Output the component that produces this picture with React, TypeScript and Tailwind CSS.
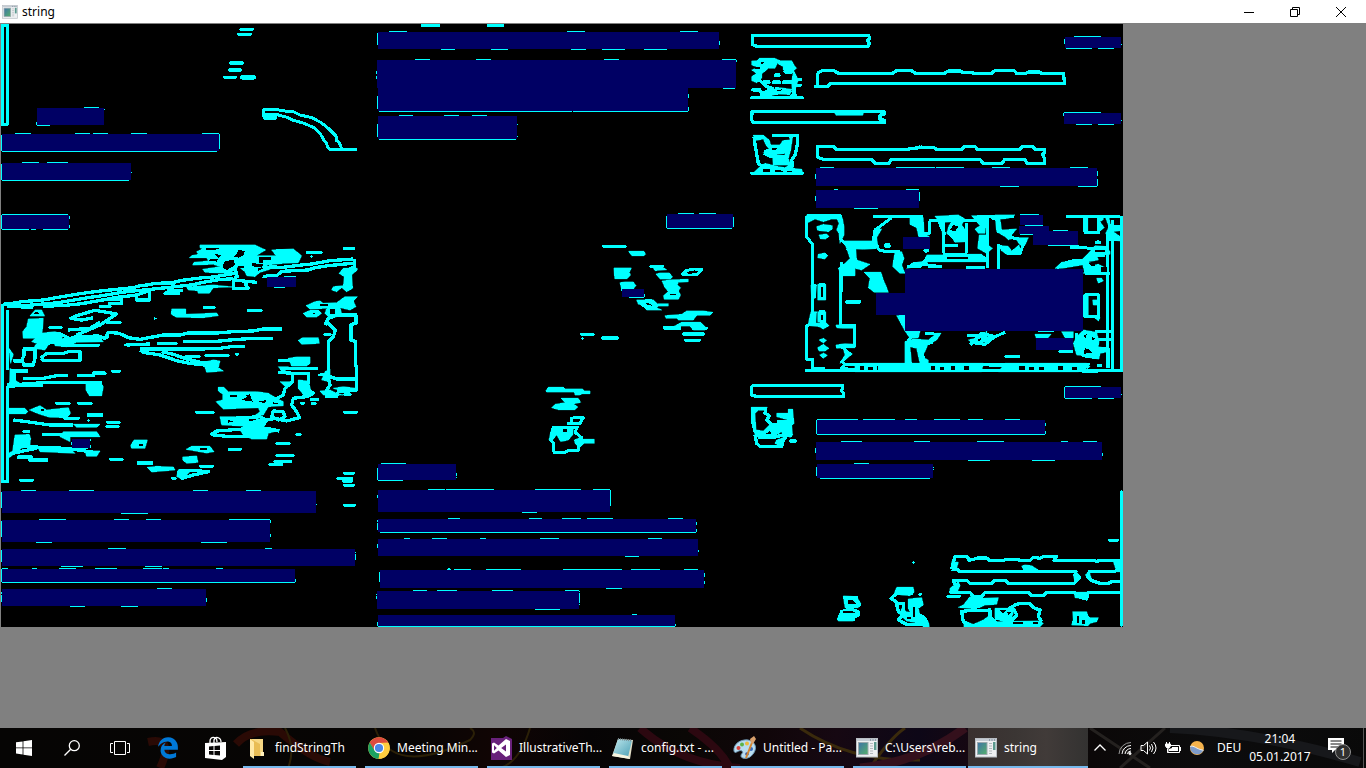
import React from "react";
import { FaEdgeLegacy } from "react-icons/fa6";

type Dash = [x1: number, x2: number, y: number, h?: number];
type Box = [x: number, y: number, w: number, h: number];

interface Region {
  x: number;
  y: number;
  weight?: number;
  edges?: string;
  solids?: string;
  holes?: string;
  dashes?: Dash[];
  boxes?: Box[];
  marks?: string;
}

// Every region is described in thirds of a pixel, relative to its own origin.
const regions: Region[] = [
  {
    x: 0,
    y: 0,
    edges:
      "M7 76H22V373H7ZM788 328H832L842 332L880 335L900 345L935 353L962 367L985 385L1008 408L1010 422L1018 428L1024 444M790 328V350M795 345H835L862 352L880 361L912 370L942 383L962 403L970 418L978 428L984 442L990 448H1070",
    dashes: [
      [718, 762, 88], [711, 756, 103], [687, 732, 189, 11], [684, 726, 210, 11],
      [669, 711, 232], [720, 768, 232, 14], [788, 831, 353, 13],
    ],
    boxes: [[111, 324, 201, 51], [6, 402, 651, 51], [6, 489, 387, 51], [6, 645, 201, 42]],
    marks:
      "M252 322H297M312 328H315M109 366V375M111 376H150M45 400H93M225 400H270M279 400H324M393 400H441M606 400H657M658 402V447M4 405V453M6 454H651M66 487H117M141 487H204M4 492V540M6 541H387M393 517H396M6 643H204M4 645V687M6 688H87M93 688H108M129 688H204M208 648V657M208 675V684",
  },
  {
    x: 0,
    y: 235,
    weight: 10,
    edges:
      "M22 225V405M8 208V739H22V452M8 208L45 204L66 200L130 195L180 186L240 176L300 168L400 158L420 152L450 149L460 146L520 142L545 136L600 129L640 126L705 115M20 215L60 213L130 207L175 203L210 197L270 187L300 183L365 172L420 166L500 158L535 154L580 149L600 144L655 134L700 131M130 214L195 211L245 206L325 192L350 187L410 180L440 170H450M325 192H365V205H325M410 178V195H448V166M707 90V108L712 125L702 130M740 135L738 150L745 160H700V135L770 142M790 103L810 96L850 97L905 90L935 87L990 77L1060 72M790 124L830 122L845 109L925 105L945 98L985 92L1065 84M1063 72V95L1045 105M230 300L300 270L350 237L285 226L230 242L212 250L245 255L280 248M205 285L270 280L300 262M115 305L150 295H175L198 305L215 315M140 325L180 318L230 305L295 303L315 310L325 292L358 295L385 308L420 313L490 300L540 300L565 294L650 294L700 290L760 288L790 282H845M320 310L325 300M550 320H640L700 314L760 310H818M380 330L450 327M420 345L430 352L480 360L530 377L570 385L640 393M485 350L520 358L560 372L600 382L635 385M420 342H600L660 340L700 334H735M68 342H105V370L100 390H72L66 375L72 360V342M122 370L140 355H190L205 350H240V376H130L122 370M22 448H60L130 443H305M30 453L130 450M70 430H130L170 422H205M230 421H285M30 408H85M45 408L42 440M975 270L985 250L1000 245L1010 240H1068V265L1053 268V315L1067 320V390L1070 400V465H1050L1035 470H1015L1010 485H980V465L990 450L985 430V380L985 320L1000 305L1006 285L990 270L980 260M990 425L1010 432H1068M835 377H920M850 400H955M835 412L880 415H925V440L920 460L940 475L920 485L880 490L875 510L890 530L898 548L860 558L825 550L800 555M878 415V440L855 460L850 480L830 490H805M665 550H700L780 545L800 555L790 570L740 568M632 600L650 588L730 582L800 580L838 588M650 588L640 600L680 604L750 604L780 595M820 528L850 530L855 545L835 555L815 545ZM40 555L80 560L150 570L220 570M48 640L65 632L130 638L200 640L295 654M125 598H210M20 660L60 650L110 640M540 706H575L625 710L580 720L545 730L535 715Z",
    solids:
      "M600 30H765L797 45L780 55L770 62L828 62L815 45L880 42L905 62L895 83L850 85L800 90L810 103L780 112L765 125L740 122L735 110L715 95L690 115L615 112L608 103L660 95L640 88L578 90L582 82L625 78L620 68H568L575 62L595 58L590 50L608 42L600 38ZM90 243L105 225H125L134 243ZM85 252L130 250L127 290L120 310H70L68 290L80 275ZM515 222H557V238L650 234L655 242L610 248L530 247L514 238ZM560 156L640 150L700 156L640 158L628 175L595 175L592 167L565 165ZM1030 100H1072V105L1055 120L1058 160L1040 170L1025 158L1010 170L995 165L1000 155L1030 152L1033 125L1017 115ZM1035 185H1072L1060 198L1068 215L1050 225L1020 218L1025 235L1010 245L990 250L975 235L980 220L930 222L918 212L945 200L960 198L970 205L1010 203ZM910 235L930 226H955L965 235L950 246H920ZM895 316L908 308H955L958 325L905 328ZM160 318L200 310L295 302L310 320L230 322L200 335L165 332ZM120 295L165 290L190 300L185 310L205 315L150 322L135 345L100 340L110 325L95 320L105 310H120ZM610 382L640 375L660 378L655 398L670 408L620 412ZM258 445H303L310 455L305 482H268L258 465ZM25 520H75L83 530L78 536H25ZM88 525L120 512L140 525L205 518L212 535L200 548L150 547L120 538ZM45 600L88 598L92 610L90 630L65 640L45 655L25 670V655L38 648ZM865 370L890 366H930V385L920 393H875ZM655 457H672L685 470H770L805 475L830 490L850 500V512L805 515L790 540L760 545L780 530L775 518L670 522L655 508L648 500L668 495V478L655 468ZM660 545H705L725 553L755 545L800 558L790 580L755 585L725 573L665 570ZM720 585H840L805 595L800 612H755L730 600ZM392 632L402 615H442L435 640H395ZM558 643L575 634H630L642 650L620 654ZM548 666L590 663L594 682L560 685L548 675ZM442 697L470 694L520 696L525 705L455 711ZM535 704L570 710L548 733L530 725ZM210 620L180 605L190 590L290 590L300 605L210 605ZM220 568H300L290 577H230ZM255 648H300L290 664H260ZM975 410L990 402V440L965 435ZM1030 480H970L960 468L990 465L1012 476ZM115 640L210 640L225 655L120 650ZM1030 470L1000 460L1030 455L1068 460ZM895 435L925 438L935 475L915 485L895 460ZM835 395H865L850 415ZM840 440H870L862 460ZM27 340L40 358L32 385ZM30 400L48 412L40 432L60 445L28 458Z",
    holes:
      "M618 39H662L640 46H618ZM640 55L665 62L655 68ZM716 45L735 48L730 62L715 68L700 64L710 58ZM672 80L700 74L705 90L680 106L668 96ZM776 66H812V74H790V84H776ZM756 84L790 88L786 98L758 94ZM715 94H733V100H715ZM632 72H655L650 80L628 77ZM775 98L790 100L775 108ZM725 495L750 480L758 500ZM775 500L800 495L795 505ZM820 502L840 507H820ZM690 480H712V486H690ZM735 480L750 478L745 488ZM418 628H428V634H418ZM600 640H622V646H600ZM938 234H945V238H938ZM960 207H985V213H960ZM990 222H1005V236H990ZM100 237L110 230L118 236ZM683 556L705 558L685 563ZM745 552L770 553L750 560ZM120 525L130 520L132 530Z",
    dashes: [
      [1029, 1065, 41], [918, 968, 53], [823, 885, 48], [608, 647, 217], [740, 788, 226], [145, 188, 277], [296, 335, 214],
      [316, 365, 262], [470, 533, 325], [553, 602, 364], [613, 689, 361], [333, 363, 409], [180, 300, 331], [165, 212, 505],
      [231, 278, 505], [585, 644, 532], [318, 362, 562], [316, 359, 575], [683, 726, 643], [826, 872, 625], [826, 884, 661],
      [820, 876, 680], [805, 850, 688], [410, 460, 684, 12], [327, 371, 673], [597, 642, 694], [513, 530, 730], [57, 102, 736],
      [1029, 1074, 532], [1029, 1065, 715], [1009, 1059, 731], [1026, 1059, 738, 12], [1029, 1065, 751], [886, 905, 598],
      [67, 90, 590], [50, 100, 667, 12], [85, 145, 675, 12], [190, 240, 550], [260, 311, 540, 12], [275, 320, 415, 12],
      [900, 915, 505], [932, 950, 505], [930, 958, 494], [970, 995, 298], [955, 990, 420], [705, 717, 358], [1030, 1055, 478, 12],
      [490, 540, 175, 12], [500, 550, 167, 10], [38, 72, 377, 12], [373, 450, 330], [494, 525, 145, 11], [60, 100, 217],
    ],
    boxes: [[801, 126, 87, 30], [216, 612, 54, 27]],
    marks:
      "M852 124H888M822 157H855M786 127H801M214 621V630M271 612V618M271 630V639M222 640H264M465 246V255M461 250H470M266 552V561M262 556H271M935 60V69M931 64H940",
  },
  {
    x: 370,
    y: 20,
    dashes: [[153, 210, 16, 10], [351, 402, 16, 10]],
    boxes: [[24, 36, 1023, 51], [21, 120, 1077, 84], [24, 203, 930, 70], [24, 288, 417, 69], [891, 582, 198, 42]],
    marks:
      "M57 34H111M591 34H645M930 34H984M22 39V75M1048 63V75M213 88H255M363 88H414M603 88H648M696 88H765M822 88H891M135 118H180M318 118H363M702 118H747M1056 118H1098M1099 120V126M19 153V162M19 168V177M1059 205H1095M22 228V267M955 222V234M955 261V273M27 274H606M609 274H954M87 286H129M222 286H267M306 286H351M22 312V351M441 313H444M441 349H444M27 358H438M924 580H972M987 580H1038M889 588V624M1090 591V621M891 625H1086",
  },
  {
    x: 740,
    y: 20,
    weight: 10,
    edges:
      "M38 46H385L389 54L383 61L388 70L384 79H50L38 74ZM232 160L248 151H280L295 160H458L470 151H514L526 160H614L625 153H660L670 158H695L702 160H755L766 151H822L830 160H858L866 156H898L904 160H970L974 190H270L265 199H222M232 160V199M36 274H432V282L420 286V297L433 301V307H40L35 300ZM232 379H280L290 388H500L545 382H580L590 388H665L675 379H705L712 388H840L848 379H876L885 388H913V398L908 404L913 415V430H862L853 418H795L785 430H730L720 418H455L446 430H405L395 418H250L233 412ZM95 346H172V375L165 405L155 420L158 440M42 350L46 380L55 430L68 440M72 395L95 390M72 400L90 409H135M38 175L60 182L80 200L98 205L70 220L55 210H38M65 215V230M162 170V228M105 205L150 215L100 220",
    solids:
      "M35 123L52 122L58 115H105L120 122H155L162 135L170 145L160 152L130 150V140L112 130L105 145H85L65 162V175L50 188L35 182V170L50 160L35 150L55 142L35 135ZM160 150L175 180L165 210L158 225L155 190ZM282 275H372L368 286H288ZM40 346H70L88 360L92 375H120L128 362L150 360L148 350H158L152 390L145 415L152 435H100L98 415L135 410V400L80 408L70 398L88 388L78 375L70 357L45 362ZM36 462L60 440L75 430L95 435L115 440L135 443L155 430L160 445L185 448L190 462ZM75 222L95 210L120 203L155 208L150 224L110 222L85 230Z",
    holes: "M70 448H90V455H70ZM105 450L130 452V456H105ZM140 452H155V456H140ZM108 212L125 208L120 214ZM95 384L115 386L95 392ZM58 128L75 126L66 133ZM44 142H60V146H44Z",
    dashes: [
      [30, 192, 234], [30, 192, 460], [102, 122, 166, 13], [67, 92, 187, 13], [95, 124, 187, 13], [126, 160, 187, 12],
      [130, 160, 155, 12], [155, 186, 179], [155, 186, 196], [34, 65, 210, 10], [60, 85, 228, 10], [150, 173, 228, 10],
    ],
    boxes: [[975, 51, 168, 33], [972, 279, 171, 33], [228, 444, 843, 54], [228, 510, 309, 54]],
    marks:
      "M1002 49H1083M973 57V72M1143 73H1146M978 85H1056M1074 85H1122M972 277H1083M970 279V288M1143 301H1146M1008 313H1056M1074 313H1122M240 442H282M468 442H585M588 442H672M756 442H810M990 442H1044M226 462V477M1072 453V468M1072 477V498M780 499H837M1014 499H1071M282 508H294M498 508H537M226 528V543M538 516V543M342 565H414M540 376V380M545 376V380",
  },
  {
    x: 795,
    y: 205,
    edges:
      "M35 33H138V105L155 120H245L252 135L275 140H312V155L300 165V185L320 200M35 34V95L52 118V355L35 362V463H52V497M138 195V362H180V422L150 425M140 170V260M155 130L165 135L180 160L150 180M980 34V498H35M235 34H385M290 38L240 75L235 105L240 125M403 48V85L380 88M403 46H575M447 50V145M430 46L450 90M515 55V145M445 121H490M445 148H515M545 34H657M577 34V190M611 192V120L640 145H675L690 105L650 98L640 80H610V45L590 38M812 34H975M870 38V82H912V38M870 270H912V335H870ZM954 45V495M939 90V490M785 190L800 178L830 168L880 165M825 127L900 130L940 125M335 185H375L395 160H570L565 155M355 175L440 185M512 187H570M355 388L338 410L335 470M390 385L430 388L410 412L375 425L390 470M525 420L560 385L600 395L570 418L525 412M600 395L630 382M845 385V425L865 452L905 458M905 410L885 450M60 238V280M88 238V282M60 320V350M88 320V350M72 238H90M72 282H90M72 320H90M140 425L165 447L140 470L150 478H880L875 490M150 478L140 490L210 498M940 65H975M940 105H980M870 205H945M900 380H950M910 432H940V490M905 405H950",
    solids:
      "M35 30H135V42H110L85 50L60 42L35 55ZM65 65L85 58L112 62V72L100 80L68 76ZM72 90L95 87L102 94L92 102L76 101ZM70 148L90 144L98 152L90 162L68 158ZM125 38L142 38L147 65V90L135 115L132 85L125 75L132 55ZM145 108H245L250 130L205 133L155 130ZM155 130L182 130L185 165L225 178L200 195L180 190V212H140L130 190L150 175L165 160ZM208 202H258L265 225L272 240L280 262H238L220 248L225 220ZM300 140H320L327 160L320 180L330 205H315L293 185ZM305 332L330 330V378L315 350ZM330 378L375 378L370 398L345 400ZM330 410L355 402L400 405L425 385H438L425 405L398 420L390 440L380 455L400 465V475H375L365 430L345 425L350 475H330ZM345 38H385L387 85L403 95L372 98L365 68L345 58ZM240 75L260 72L245 98L248 125H225L235 105ZM420 34L490 30L510 42L500 60L515 80L510 110L480 112L470 98L455 85L462 62L470 50L445 52V120L440 60ZM530 32H575L570 85H550L540 72L555 62ZM553 90H578V120L593 130L575 145L548 130ZM395 150H445L440 170H400L388 180L335 190L350 175L390 168ZM445 148H560L572 160V170H440ZM600 30H660L640 40L615 42L620 75L665 72L645 95L655 100L640 104L630 95L605 80ZM660 98L700 98L690 120H675ZM618 122L640 124L650 138L672 120L680 145L635 148L618 136ZM870 38H878V78H868ZM930 34H942L945 55L960 70L980 65V76L955 80L980 98V108L945 105L932 85L942 65ZM908 34H925V44L915 50L928 68L912 80ZM880 145L900 122L935 125L945 140V148L905 150L910 165L880 170L860 180L800 190H780L800 172L860 165ZM862 175L880 172L900 180L910 205H870ZM865 205L880 182L910 178L935 190V208ZM905 220H920L925 228L910 234ZM893 285H912V300H895ZM895 335L915 338L910 348ZM48 240H65L60 280H50ZM68 238H92V285H68ZM48 320H65L62 355L90 350L102 362L85 372L72 365L45 362L40 355ZM68 320H92V350H68ZM68 428L85 418L102 430L90 438H72ZM72 405L85 400L95 406L85 414ZM74 450L86 444L97 451L85 460ZM123 360H180V370H140L125 368ZM123 420L150 416L180 418V428H145L125 430ZM145 430L172 447L150 465L135 475L150 450ZM520 405L540 400L570 385L575 378V395L600 395L580 412L530 412ZM720 388H768L758 400H724ZM800 380H835V398H810ZM835 415L845 395L865 375L905 382L912 410L905 460L870 452L845 450ZM905 425L940 430V440L915 445L912 462L885 458ZM180 478L205 475H565L560 500H180ZM630 475H875L885 485L850 500H610ZM865 270H880V335H865Z",
    holes:
      "M195 484H208V494H195ZM220 485H235V495H220ZM245 484H250V494H245ZM408 484H420V496H408ZM435 486H448V496H435ZM468 484H480V496H468ZM508 484H522V494H508ZM672 484H690V496H672ZM703 486H716V496H703ZM733 486H746V496H733ZM790 484H805V496H790ZM830 486H845V496H830ZM455 155H520V162H455ZM475 60L490 65L480 80L465 75ZM460 90L475 105L458 108ZM870 430L882 434L892 444L866 446ZM865 392L875 388L872 398ZM890 395L900 400L890 408ZM900 135H930V142H900ZM880 175H900V182H890ZM78 245H83V275H78ZM78 330H84V345H78ZM918 186H935V200H918ZM548 405L560 398L555 410ZM455 128H505V143H455Z",
    dashes: [
      [267, 287, 122, 16], [385, 402, 137, 12], [150, 200, 291, 10], [628, 675, 455], [580, 626, 481], [790, 835, 439],
      [515, 560, 391], [30, 95, 497, 11], [55, 92, 493, 14], [905, 922, 481], [900, 930, 152, 10], [900, 918, 112, 11],
      [235, 288, 34], [860, 910, 500, 8],
    ],
    boxes: [
      [675, 30, 69, 30], [671, 63, 90, 24], [714, 78, 135, 42], [324, 96, 81, 36], [330, 192, 534, 186],
      [243, 264, 90, 66], [723, 399, 111, 36],
    ],
    marks: "M675 28H732M690 61H744M675 88H714M773 76H819M759 121H852M177 10H249M729 379H777M400 187H442",
  },
  {
    x: 540,
    y: 235,
    edges:
      "M425 120L440 106L460 103H486L470 120H428M295 200L315 198H335L348 212L325 222L305 208M95 563V550L105 548H130L120 565H82M35 577H112L105 592L125 608L110 625M38 580L32 615L42 625V652H75L85 646H115L118 630M375 279H405L425 268H478L485 280",
    solids:
      "M222 99H274L268 112L272 120L262 131H224ZM240 143L255 141H280L288 152L280 162H245ZM266 49H312L317 58L312 62H275ZM348 117L360 114H388L398 126L390 132H360ZM366 138L395 134L445 133V140L415 142L412 150L422 158L415 168L422 180L415 193H373L370 182L385 170L375 158ZM335 92H368L370 98L380 104L345 107ZM290 195H340L352 206H385V213H355L350 218L365 225H320L310 210L295 208ZM375 242L425 238L440 228H490L518 232L510 241H470L460 255H415L412 250H378ZM400 275L425 262H482L500 280L495 285H460L450 273H425L415 282ZM18 467L25 457H70L75 462H128L132 468H150V476H128L118 480H105L103 471H20ZM64 490L115 490L122 502L100 507L114 516L105 524H55L35 518L45 508L75 503ZM38 577H100L98 600L85 615L62 620L50 600L35 618L27 615L32 592ZM103 615L120 608L130 613H163V625H132L118 638L105 625Z",
    holes: "M440 113L465 106L460 115L445 118ZM315 203L330 206L335 212L322 210ZM390 177H408V180H390ZM68 582H80V590H70Z",
    dashes: [[186, 260, 34], [328, 372, 94], [120, 164, 298], [183, 237, 309, 11], [426, 495, 297, 11], [432, 483, 316], [369, 425, 279, 12], [455, 504, 280]],
    boxes: [[246, 162, 66, 24]],
    marks: "M267 187H312M313 177V186M245 159V168M127 306V315M123 310H132",
  },
  {
    x: 740,
    y: 375,
    weight: 10,
    edges:
      "M38 32H308V40L304 47L311 55V64H48L35 60V36ZM40 100L37 135L45 170L60 180L90 160M78 100L75 115L88 122L80 135L95 150H140M45 180L50 205L60 214H125L130 195L142 180L145 150M150 105V185M112 140H160M110 120H150M55 187H100L130 180M635 582L645 545H682L687 556L700 553L712 549H740L748 556H790L800 553H832L840 556H870L880 547L900 550L910 545H950L942 556H1060L1070 559L1085 556H1140M635 582L655 585L660 590H1008L1005 600L1018 607L1003 625H805L798 617H762L755 626H690L682 617H640L650 640L632 652H690L700 665H725L735 652H865L875 661H910L920 652H1005L1015 665L1040 672L1045 652H1144M1140 560L1132 566L1135 585L1120 590H1048L1042 605L1055 617L1080 625H1105L1115 620H1142M310 667H350V680L358 690L350 695H320L318 675M295 735L305 710L330 702L355 710V720L330 732M455 668L470 655H520M450 668L468 680L475 710L490 720L475 735L500 748H562L555 730L540 720M465 685H490V705M660 710L700 705H750V735M665 710L670 740L690 750M770 705H800L825 690L840 685H868L880 698L900 705L895 725L905 740M770 705V730L800 720M820 700L830 720L815 735H790M998 745L1010 735V715H1035L1048 735H1072",
    solids:
      "M34 97H82L75 106H55L45 115L48 165L70 168L90 148H140L145 180L130 195L125 215L105 205L110 195L130 188L125 170L100 185L60 190L45 180L35 130ZM145 103H158L162 145L155 152L158 180L150 188L142 165L150 150H112V143L145 135L110 125V115H145ZM470 637H520L522 652L510 662L485 660L463 655ZM505 672L545 668L550 690L535 700L540 720L530 735L515 720L505 700ZM845 573L855 570L875 572L895 585V592H855ZM1002 652H1045L1042 675L1030 670L1005 668ZM995 750L1000 735L998 710H1040L1045 728H1075L1070 740L1050 745L1045 752ZM670 690L690 665L730 670L775 668L770 688L735 690L710 702L655 697ZM672 738L700 748L730 735L750 720L770 740L900 738L910 745L900 756H672ZM765 700H825L815 728L790 740L765 730ZM485 700L500 710L540 720L565 740L568 755H550L540 745L500 738L480 720ZM292 732L300 715H360L340 725V738H295ZM635 560L655 562L650 580L635 580ZM1120 560H1142V590H1130ZM630 640L655 620L660 632L650 655H630ZM1008 590L1022 605L1005 620L1000 600ZM1035 600L1048 590L1055 615ZM310 663L350 665L362 685L355 698H315Z",
    holes:
      "M75 178L90 168L95 175ZM325 675H338L350 686H325ZM310 708H338V714H310ZM675 715H730V728H705L690 738L675 730ZM820 740H848V746H820ZM880 742H895V746H880ZM780 706H800L788 716ZM800 712H812L806 720ZM1012 722H1018V745H1012ZM1026 736H1034V746H1026ZM500 726H512V732H500ZM520 695H526V725H520ZM710 699H745V703H710Z",
    dashes: [[147, 171, 198, 10], [1104, 1137, 496], [619, 663, 664], [535, 546, 658], [295, 345, 733, 10], [318, 360, 719, 10]],
    boxes: [[975, 36, 168, 33], [231, 135, 684, 42], [228, 201, 858, 54], [231, 267, 348, 42]],
    marks:
      "M975 34H1083M973 36V69M975 70H1056M1074 70H1122M1143 58H1146M231 133H354M369 133H465M495 133H531M582 133H660M684 133H729M795 133H840M229 135V177M231 178H915M916 144V153M916 168V177M303 199H366M522 199H570M711 199H792M963 199H984M1029 199H1071M226 219V234M1087 234V243M684 256H750M876 256H945M342 265H387M229 276V303M580 276V279M580 282V285M240 310H570M520 558V567M516 562H525M1141 348V753M1144 345V756M1147 348V753",
  },
  {
    x: 0,
    y: 480,
    dashes: [[1029, 1065, 16], [1029, 1068, 76]],
    boxes: [[6, 33, 942, 66], [6, 120, 804, 66], [6, 207, 1059, 51], [6, 267, 879, 39], [6, 327, 612, 51]],
    marks:
      "M63 31H108M207 31H282M579 31H624M738 31H783M4 36V84M948 73H951M363 100H444M117 118H198M342 118H387M438 118H483M687 118H810M4 123V171M811 120V129M811 162V171M108 187H156M603 187H681M324 205H378M795 205H816M4 210V246M1066 216V219M1066 222V240M183 259H249M435 259H486M6 265H24M96 265H111M177 265H228M285 265H351M429 265H486M489 265H507M648 265H669M4 267V306M886 297V306M6 307H885M471 325H516M4 336V342M4 345V366M619 354V366M210 379H255M363 379H414",
  },
  {
    x: 370,
    y: 455,
    boxes: [
      [24, 27, 234, 48], [24, 105, 696, 66], [24, 192, 954, 39], [24, 252, 960, 51], [30, 345, 972, 54],
      [21, 408, 606, 54], [24, 480, 891, 33],
    ],
    marks:
      "M33 25H108M22 39V75M259 54V63M259 66V69M24 76H99M174 103H225M228 103H372M495 103H633M669 103H720M22 120V129M721 105V153M456 172H501M234 190H270M477 190H516M576 190H633M651 190H729M894 190H939M22 195V201M22 204V225M979 201V210M979 222V231M30 232H978M102 250H120M186 250H231M330 250H348M510 250H567M834 250H876M22 267V279M985 285V291M765 304H807M231 343H243M234 340H240M252 343H303M348 343H453M579 343H756M783 343H870M942 343H984M28 351V381M1003 354V366M1003 378V387M708 400H756M129 406H171M201 406H261M366 406H429M585 406H627M19 417V420M19 423V432M628 408V411M628 414V444M628 447V450M495 463H570M786 478H801M22 501V513M916 507V513M24 514H915",
  },
];

function EdgeMap() {
  return (
    <svg
      role="img"
      aria-label="Detected text regions"
      className="block shrink-0 bg-black"
      width="1122"
      height="603"
      viewBox="1 24 1122 603"
      shapeRendering="crispEdges"
    >
      {regions.map((r, i) => (
        <g key={i} transform={`translate(${r.x} ${r.y}) scale(0.33333)`}>
          {r.solids && <path d={r.solids} fill="#00ffff" stroke="#00ffff" strokeWidth="2" strokeLinejoin="round" />}
          {r.edges && (
            <path d={r.edges} fill="none" stroke="#00ffff" strokeWidth={r.weight ?? 9} strokeLinejoin="round" />
          )}
          {r.holes && <path d={r.holes} fill="#000" />}
          {r.dashes?.map(([x1, x2, y, h = 9], j) => (
            <path
              key={j}
              d={`M${x1 + h / 2} ${y}H${x2 - h / 2}`}
              stroke="#00ffff"
              strokeWidth={h}
              strokeLinecap="round"
            />
          ))}
          {r.boxes?.map(([x, y, w, h], j) => (
            <rect key={j} x={x} y={y} width={w} height={h} fill="#000064" />
          ))}
          {r.marks && <path d={r.marks} fill="none" stroke="#00ffff" strokeWidth="3" />}
        </g>
      ))}
    </svg>
  );
}

function AppIcon({ className }: { className: string }) {
  return (
    <svg className={className} viewBox="0 0 22 20" aria-hidden="true">
      <defs>
        <linearGradient id="appPane" x1="0" y1="0" x2="1" y2="1">
          <stop offset="0" stopColor="#3f73a8" />
          <stop offset="1" stopColor="#55b06a" />
        </linearGradient>
      </defs>
      <rect x="0.5" y="0.5" width="21" height="18.5" fill="#eef0f2" stroke="#b9bec4" />
      <path d="M1 2H21" stroke="#c5ccd4" strokeWidth="2" />
      <path d="M14 2H15M16.500 2H17.500M19 2H20" stroke="#5e7080" />
      <rect x="2.500" y="4.500" width="9.500" height="12" fill="url(#appPane)" stroke="#9aa7ad" />
      <path d="M14 5.500H17M14 8H17M14 10.500H17M14 13H17M14 15.500H17" stroke="#b3b8bd" />
      <rect x="18" y="4" width="2.500" height="8" fill="#5c9a8f" />
    </svg>
  );
}

function FolderIcon() {
  return (
    <svg className="h-6 w-6" viewBox="0 0 24 24" aria-hidden="true">
      <path d="M5 3H16V20H5Z" fill="#e9bd55" />
      <path d="M6 3H18V16L19 17V20H15V8Z" fill="#f6d783" />
      <path d="M5 3L9 6V23L5 20Z" fill="#ffe9a6" />
      <path d="M16 16H19V20H16Z" fill="#fff0bd" />
    </svg>
  );
}

function ChromeIcon() {
  return (
    <svg className="h-6 w-6" viewBox="0 0 24 24" aria-hidden="true">
      <circle cx="12" cy="12" r="10.800" fill="#ffcd40" />
      <path d="M2.650 6.600A10.800 10.800 0 0 1 21.350 6.600L12 7L7.300 14.500Z" fill="#dd4b3e" />
      <path d="M2.650 6.600L7.600 14.600L12 17L12.500 16.900L11.500 22.800A10.800 10.800 0 0 1 2.650 6.600Z" fill="#1ba261" />
      <path d="M12 7H21.500A10.800 10.800 0 0 1 11.500 22.800L16.500 14.300Z" fill="#ffcd40" />
      <circle cx="12" cy="12" r="5.200" fill="#fff" />
      <circle cx="12" cy="12" r="4.100" fill="#4a86e8" />
    </svg>
  );
}

function VisualStudioIcon() {
  return (
    <svg className="h-6 w-6" viewBox="0 0 24 24" aria-hidden="true">
      <path d="M2 2L14 2L17 0L23 3V24H2Z" fill="#68217a" />
      <path
        fillRule="evenodd"
        d="M17 3L21 5V19L17 21L9.500 14.500L5 17.500L3 16.500V7.500L5 6.500L9.500 9.500ZM17 8.500L12.200 12L17 15.500ZM5 9.300V14.700L7.800 12Z"
        fill="#fff"
      />
    </svg>
  );
}

function NotepadIcon() {
  return (
    <svg className="h-6 w-6" viewBox="0 0 24 24" aria-hidden="true">
      <defs>
        <linearGradient id="notePage" x1="0" y1="0" x2="1" y2="1">
          <stop offset="0" stopColor="#bfe8ee" />
          <stop offset="1" stopColor="#4a9fb4" />
        </linearGradient>
      </defs>
      <path d="M7 3L22 4L19 23L1 20Z" fill="#e3e0c8" />
      <path d="M7 3L21 4.500L17 21L2 18Z" fill="url(#notePage)" />
      <path d="M7 3L21 4.500" stroke="#7a8b90" strokeWidth="2" strokeDasharray="1 1" />
      <path d="M1 20L3 17L17 20L19 23Z" fill="#f6f4df" />
    </svg>
  );
}

function PaintIcon() {
  return (
    <svg className="h-6 w-6" viewBox="0 0 24 24" aria-hidden="true">
      <path d="M1 15C0 8 8 3 15 4C22 5 25 12 20 18C16 24 8 23 8 20C8 17 11 17 9 15C6 13 2 19 1 15Z" fill="#b9dcf0" stroke="#6f9ab7" />
      <circle cx="5.500" cy="12" r="2" fill="#d8403a" />
      <circle cx="9" cy="8.500" r="2" fill="#5cb347" />
      <circle cx="14" cy="7.500" r="2" fill="#eeb93b" />
      <circle cx="18" cy="13" r="2" fill="#3769bb" />
      <circle cx="14" cy="18" r="1.800" fill="#354c95" />
      <path d="M20 4L13 22" stroke="#d38634" strokeWidth="2" />
      <path d="M17 3L21 0L23 3L20 8L18 7Z" fill="#d9a06c" />
    </svg>
  );
}

const tasks: { label: string; icon: React.ReactNode }[] = [
  { label: "findStringTh", icon: <FolderIcon /> },
  { label: "Meeting Min...", icon: <ChromeIcon /> },
  { label: "IllustrativeTh...", icon: <VisualStudioIcon /> },
  { label: "config.txt - ...", icon: <NotepadIcon /> },
  { label: "Untitled - Pa...", icon: <PaintIcon /> },
  { label: "C:\\Users\\reb...", icon: <AppIcon className="h-5 w-6" /> },
];

function LaunchButton({ label, children }: { label: string; children: React.ReactNode }) {
  return (
    <button type="button" aria-label={label} className="flex h-10 w-12 shrink-0 items-center justify-center">
      {children}
    </button>
  );
}

// Faint light trails of the wallpaper that show through the translucent bar.
function WallpaperTrails() {
  return (
    <svg
      className="absolute inset-0 h-full w-full"
      viewBox="0 0 1366 40"
      preserveAspectRatio="none"
      fill="none"
      aria-hidden="true"
    >
      <path d="M148 14Q175 8 160 40M236 16Q250 0 280 4Q310 30 330 34" stroke="#2a0a05" strokeWidth="8" />
      <path d="M285 0Q296 20 288 40M375 0Q392 50 470 12Q478 4 470 0M500 40Q520 34 530 0" stroke="#2b2007" strokeWidth="2" />
      <path d="M640 0Q680 36 740 40M690 0Q720 20 730 40" stroke="#2c0810" strokeWidth="8" />
      <path d="M800 0Q850 34 920 32M870 40Q890 10 905 0" stroke="#3a2a0c" strokeWidth="3" />
      <path d="M860 40Q920 34 965 0" stroke="#34101c" strokeWidth="9" />
      <path d="M1090 0L1150 40M1120 40L1165 0" stroke="#24211f" strokeWidth="3" />
      <path d="M1170 0Q1260 4 1360 34" stroke="#17181b" strokeWidth="10" />
    </svg>
  );
}

function Taskbar() {
  return (
    <footer className="relative h-10 shrink-0 overflow-hidden bg-[linear-gradient(100deg,#060504_0%,#070504_30%,#100504_36%,#060405_43%,#0a0705_50%,#100609_56%,#160812_61%,#0d0717_67%,#180810_72%,#0b0808_80%,#0c0c0d_88%,#090909_100%)] text-xs text-white">
      <WallpaperTrails />
      <div className="relative flex h-10 items-stretch">
        <nav aria-label="Launcher" className="flex shrink-0">
          <LaunchButton label="Start">
            <svg className="size-4" viewBox="0 0 16 16" fill="#fff">
              <path d="M0 2.300L6.600 1.400V7.500H0ZM7.400 1.300L16 0V7.500H7.400ZM0 8.300H6.600V14.500L0 13.600ZM7.400 8.300H16V16L7.400 14.700Z" />
            </svg>
          </LaunchButton>
          <LaunchButton label="Search">
            <svg className="size-4" viewBox="0 0 16 16" fill="none" stroke="#fff" strokeWidth="1.300">
              <circle cx="10.300" cy="5.700" r="5" />
              <path d="M6.700 9.300L0.500 15.500" />
            </svg>
          </LaunchButton>
          <LaunchButton label="Task view">
            <svg className="h-4 w-5" viewBox="0 0 20 16" fill="none" stroke="#fff">
              <path d="M4.500 1.500H15.500V14.500H4.500ZM3 3.500H0.500V12.500H3M17 3.500H19.500V12.500H17" />
            </svg>
          </LaunchButton>
          <LaunchButton label="Edge">
            <FaEdgeLegacy className="size-[22px] text-[#0078d7]" />
          </LaunchButton>
          <LaunchButton label="Store">
            <svg className="size-6" viewBox="0 0 24 24">
              <path d="M6 8V5C6 0 13 0 13 6M10 7V4C11 0 17 1 17 6" fill="none" stroke="#fff" strokeWidth="1.300" />
              <path d="M1 7L22 6V21L18 24L1 22Z" fill="#fff" />
              <path d="M5 10.500L9.500 10V14H5ZM10.500 10L16 9.500V14H10.500ZM5 15H9.500V19L5 18.500ZM10.500 15H16V19.500L10.500 19Z" fill="#080606" />
            </svg>
          </LaunchButton>
        </nav>

        <nav aria-label="Open windows" className="ml-[3px] flex shrink-0">
          <div className="flex gap-[9px]">
            {tasks.map((t) => (
              <button
                key={t.label}
                type="button"
                className="flex w-[113px] items-center gap-1.5 border-b-2 border-[#76b9ed] pl-0.5 pt-0.5 text-left"
              >
                <span className="flex w-6 shrink-0 justify-center">{t.icon}</span>
                <span className="whitespace-nowrap">{t.label}</span>
              </button>
            ))}
          </div>
          <button
            type="button"
            aria-current="true"
            className="ml-0.5 flex w-[120px] items-center gap-1.5 border-b-2 border-[#76b9ed] bg-[linear-gradient(90deg,#39302f,#3b3634_40%,#413b39_65%,#333231)] pl-1.5 pt-0.5 text-left"
          >
            <AppIcon className="h-5 w-6 shrink-0" />
            <span>string</span>
          </button>
        </nav>

        <div className="ml-auto flex shrink-0 items-center">
          <button type="button" aria-label="Show hidden icons" className="flex w-6 justify-center">
            <svg className="h-2 w-3" viewBox="0 0 12 8" fill="none" stroke="#fff" strokeWidth="1.300">
              <path d="M0.500 6.500L6 1L11.500 6.500" />
            </svg>
          </button>
          <button type="button" aria-label="Network" className="ml-px flex w-6 justify-center">
            <svg className="h-3.5 w-3.5" viewBox="0 0 14 14" fill="none" stroke="#fff">
              <path d="M1 13A12 12 0 0 1 13 1.500" stroke="#999" />
              <path d="M4 13A9 9 0 0 1 13 4.500M7 13A6 6 0 0 1 13 7.500M9.500 13A3.500 3.500 0 0 1 13 10" />
              <circle cx="12" cy="12.500" r="1" fill="#fff" />
            </svg>
          </button>
          <button type="button" aria-label="Volume" className="flex w-6 justify-center">
            <svg className="h-4 w-[18px]" viewBox="0 0 18 16" fill="none" stroke="#fff">
              <path d="M1 5.500H3.500L7.500 2V14L3.500 10.500H1ZM9.500 5.500Q11.500 8 9.500 10.500M11.500 4Q14.500 8 11.500 12M13.500 2Q18.500 8 13.500 14" />
            </svg>
          </button>
          <button type="button" aria-label="Battery" className="flex w-6 justify-center">
            <svg className="h-3.5 w-4" viewBox="0 0 16 14" fill="none" stroke="#fff">
              <path d="M6 4.500H14.500V11.500H2.500V8M15.500 6V10M1.500 1V3M4.500 1V3M3 7V12" />
              <path d="M0.500 3H5.500V5L4 7H2L0.500 5Z" fill="#fff" />
              <path d="M7 6H13V10H4V8L7 7Z" fill="#fff" stroke="none" />
            </svg>
          </button>
          <button type="button" aria-label="Night mode" className="flex w-6 justify-center">
            <svg className="h-3.5 w-3.5" viewBox="0 0 14 14">
              <circle cx="7" cy="7" r="7" fill="#f5b34d" />
              <path d="M0.200 5.500C4 4 6 8 13.500 9.300A7 7 0 0 1 0.200 5.500Z" fill="#7e9ccb" />
              <path d="M0.200 5.500C4 4 6 8 13.500 9.300" fill="none" stroke="#edf1f5" />
            </svg>
          </button>
          <span className="ml-2">DEU</span>
          <time className="ml-2 text-center leading-[18px]" dateTime="2017-01-05T21:04">
            <span className="block">21:04</span>
            <span className="block">05.01.2017</span>
          </time>
          <button type="button" aria-label="1 notification" className="ml-4 flex">
            <svg className="size-6" viewBox="0 0 24 24">
              <path d="M1 2H17V14H8L5 17V14H1Z" fill="#fff" />
              <path d="M3.500 5H14.500M3.500 8H14.500M3.500 11H11" stroke="#111" />
              <circle cx="16" cy="16" r="7.500" fill="#303030" stroke="#929292" />
              <text x="16" y="20" textAnchor="middle" fill="#fff" fontSize="11">1</text>
            </svg>
          </button>
          <span className="ml-3 mr-1 h-10 w-px bg-[#555]" />
        </div>
      </div>
    </footer>
  );
}

export default function App() {
  return (
    <div className="flex min-h-screen flex-col bg-[#808080] font-['Noto_Sans','Open_Sans',sans-serif] text-xs">
      <header className="flex h-[23px] shrink-0 items-center bg-white text-black">
        <AppIcon className="ml-0.5 h-3.5 w-4" />
        <h1 className="ml-1 text-xs">string</h1>
        <div className="ml-auto mr-0.5 flex">
          <button type="button" aria-label="Minimize" className="flex h-5 w-[46px] items-center justify-center">
            <svg className="size-2.5" viewBox="0 0 10 10" stroke="#000"><path d="M0 5.500H10" /></svg>
          </button>
          <button type="button" aria-label="Restore" className="flex h-5 w-[46px] items-center justify-center">
            <svg className="size-2.5" viewBox="0 0 10 10" fill="none" stroke="#000">
              <path d="M0.500 2.500H7.500V9.500H0.500ZM2.500 2.500V0.500H9.500V7.500H7.500" />
            </svg>
          </button>
          <button type="button" aria-label="Close" className="flex h-5 w-[46px] items-center justify-center">
            <svg className="size-2.5" viewBox="0 0 10 10" fill="none" stroke="#000"><path d="M0 0L10 10M10 0L0 10" /></svg>
          </button>
        </div>
      </header>
      <main className="flex-1 overflow-hidden pl-px pt-px">
        <EdgeMap />
      </main>
      <Taskbar />
    </div>
  );
}
